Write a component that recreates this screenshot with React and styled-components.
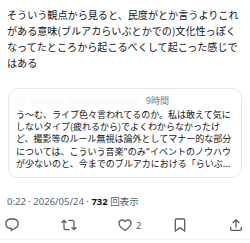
import React from 'react'
import styled, { createGlobalStyle } from 'styled-components'

const GlobalStyle = createGlobalStyle`
  body {
    margin: 0;
    background: #ffffff;
    font-family: "Noto Sans CJK JP", "Noto Sans", sans-serif;
    color: #0f1419;
  }
`

const Tweet = styled.article`
  width: 250px;
  box-sizing: border-box;
  padding: 0 8px 0 7px;
  border-bottom: 1px solid #eff3f4;
`

const Body = styled.div`
  font-size: 10.1px;
  line-height: 16px;
  padding-top: 7px;
`

const QuoteCard = styled.div`
  margin: 17px 0 0 1px;
  width: 234px;
  box-sizing: border-box;
  border: 1px solid #e3e8eb;
  border-radius: 10px;
  padding: 6px 7px 7px 7px;
`

const QuoteHeader = styled.div`
  display: flex;
  align-items: center;
  gap: 4px;
  height: 12px;
  font-size: 9px;
  line-height: 12px;
  margin-bottom: 2px;
`

const Avatar = styled.span`
  width: 10px;
  height: 10px;
  border-radius: 50%;
  background: #fafafb;
`

const HiddenName = styled.span`
  width: ${p => p.$w}px;
  height: 6px;
  border-radius: 3px;
  background: #fbfbfc;
`

const Time = styled.span`
  margin-left: 2px;
  color: #6e7a85;
`

const QuoteText = styled.div`
  font-size: 9px;
  line-height: 12.2px;
  display: -webkit-box;
  -webkit-line-clamp: 5;
  -webkit-box-orient: vertical;
  overflow: hidden;
`

const Meta = styled.div`
  margin-top: 18px;
  font-family: "Noto Sans", "Noto Sans CJK JP", sans-serif;
  font-size: 9.5px;
  line-height: 12px;
  color: #536471;
`

const Views = styled.b`
  color: #0f1419;
  font-weight: 700;
`

const Actions = styled.div`
  display: grid;
  grid-template-columns: 57px 56px 55px 56px 1fr;
  align-items: center;
  height: 28px;
  margin-top: 3px;
  margin-left: -3px;
  color: #536471;
`

const Action = styled.div`
  display: flex;
  align-items: center;
  gap: 3px;
  font-size: 9.5px;
  font-family: "Noto Sans", sans-serif;
`

const Icon = ({ d }) => (
  <svg width="16" height="16" viewBox="0 0 24 24" fill="currentColor">
    <path d={d} />
  </svg>
)

const icons = {
  reply: 'M1.751 10c0-4.42 3.584-8 8.005-8h4.366c4.49 0 8.129 3.64 8.129 8.13 0 2.96-1.607 5.68-4.196 7.11l-8.054 4.46v-3.69h-.067c-4.49.1-8.183-3.51-8.183-8.01zm8.005-6c-3.317 0-6.005 2.690-6.005 6 0 3.37 2.77 6.08 6.138 6.01l.351-.01h1.761v2.3l5.087-2.81c1.951-1.08 3.163-3.13 3.163-5.360 0-3.39-2.744-6.13-6.129-6.13H9.756z',
  retweet: 'M4.5 3.88l4.432 4.14-1.364 1.46L5.5 7.55V16c0 1.1.896 2 2 2H13v2H7.5c-2.209 0-4-1.79-4-4V7.55L1.432 9.48.068 8.02 4.5 3.88zM16.5 6H11V4h5.5c2.209 0 4 1.79 4 4v8.45l2.068-1.93 1.364 1.46-4.432 4.14-4.432-4.14 1.364-1.46 2.068 1.93V8c0-1.1-.896-2-2-2z',
  like: 'M16.697 5.5c-1.222-.06-2.679.51-3.89 2.16l-.805 1.09-.806-1.09C9.984 6.01 8.526 5.440 7.304 5.5c-1.243.07-2.349.78-2.91 1.910-.552 1.12-.633 2.78.479 4.82 1.074 1.970 3.257 4.270 7.129 6.610 3.870-2.340 6.052-4.640 7.126-6.610 1.111-2.040 1.030-3.700.477-4.820-.561-1.130-1.666-1.840-2.908-1.910zm4.187 7.69c-1.351 2.48-4.001 5.12-8.379 7.67l-.503.3-.504-.3c-4.379-2.55-7.029-5.19-8.382-7.67-1.36-2.5-1.41-4.86-.514-6.67.887-1.79 2.647-2.91 4.601-3.01 1.651-.09 3.368.56 4.798 2.01 1.429-1.45 3.146-2.1 4.796-2.01 1.954.1 3.714 1.22 4.601 3.01.896 1.81.846 4.17-.514 6.67z',
  bookmark: 'M4 4.5C4 3.12 5.119 2 6.5 2h11C18.881 2 20 3.12 20 4.5v18.44l-8-5.71-8 5.71V4.5zM6.5 4c-.276 0-.5.22-.5.5v14.56l6-4.29 6 4.29V4.5c0-.28-.224-.5-.5-.5h-11z',
  share: 'M12 2.59l5.7 5.7-1.41 1.42L13 6.41V16h-2V6.41l-3.3 3.3-1.41-1.42L12 2.59zM21 15l-.02 3.51c0 1.38-1.12 2.49-2.5 2.49H5.5C4.11 21 3 19.88 3 18.5V15h2v3.5c0 .28.22.5.5.5h12.98c.28 0 .5-.22.5-.5L19 15h2z',
}

export default function App() {
  return (
    <>
      <GlobalStyle />
      <Tweet>
        <Body>
          そういう観点から見ると、民度がとか言うよりこれがある意味(ブルアカらいぶとかでの)文化性っぽくなってたところから起こるべくして起こった感じではある
        </Body>
        <QuoteCard>
          <QuoteHeader>
            <Avatar />
            <HiddenName $w={34} />
            <HiddenName $w={72} />
            <Time>9時間</Time>
          </QuoteHeader>
          <QuoteText>
            う〜む、ライブ色々言われてるのか。私は敢えて気にしないタイプ(疲れるから)でよくわからなかったけど、撮影等のルール無視は論外としてマナー的な部分については、こういう音楽"のみ"イベントのノウハウが少ないのと、今までのブルアカにおける「らいぶ...
          </QuoteText>
        </QuoteCard>
        <Meta>
          0:22 · 2026/05/24 · <Views>732</Views> 回表示
        </Meta>
        <Actions>
          <Action><Icon d={icons.reply} /></Action>
          <Action><Icon d={icons.retweet} /></Action>
          <Action><Icon d={icons.like} />2</Action>
          <Action><Icon d={icons.bookmark} /></Action>
          <Action><Icon d={icons.share} /></Action>
        </Actions>
      </Tweet>
    </>
  )
}
